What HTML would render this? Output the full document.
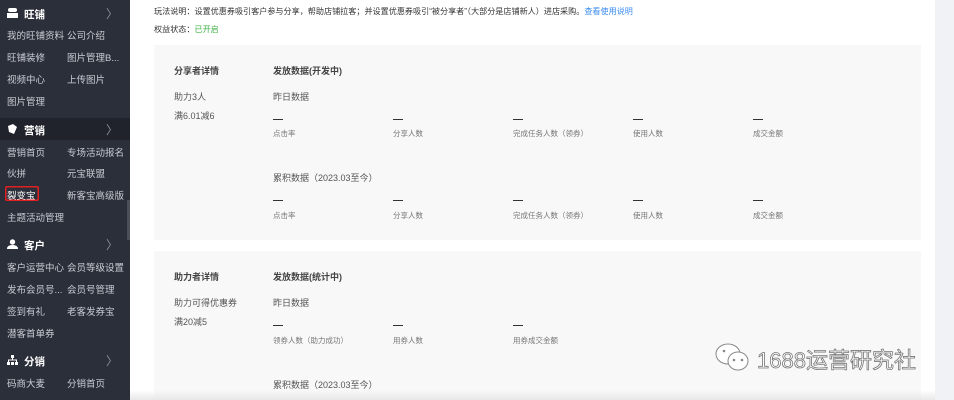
<!DOCTYPE html>
<html><head><meta charset="utf-8"><style>
*{margin:0;padding:0;box-sizing:border-box}
body{width:954px;height:400px;overflow:hidden;background:#fff;font-family:"Liberation Sans","Noto Sans CJK SC",sans-serif;position:relative}
.sb{position:absolute;left:0;top:0;width:130px;height:400px;background:#2b2f3a;color:#c9ccd3;font-size:9.5px}
.sb .t{position:absolute;white-space:nowrap}
.sb .h{position:absolute;left:0;width:130px;height:22px;color:#fff;font-size:10.5px;font-weight:bold}
.sb .h span{position:absolute;left:24px;top:5px}
.sb .h i{position:absolute;right:12px;top:3px;font-style:normal;color:#8a8f99;font-weight:normal;font-size:12px}
.ic{position:absolute;left:7px;top:6px;width:11px;height:10px}
.main{position:absolute;left:130px;top:0;width:805px;height:400px;background:#fff}
.rs{position:absolute;left:935px;top:0;width:19px;height:400px;background:#f0f2f5}
.p{position:absolute;left:154px;width:767px;background:#f8f8f8}
.a{position:absolute;font-size:9px;color:#333;white-space:nowrap}
.b{font-weight:600;color:#444}
.s{position:absolute;font-size:7.5px;color:#777;white-space:nowrap}
.d{position:absolute;width:10px;height:1.2px;background:#333}
</style></head><body>
<div class="sb">
 <div class="h" style="top:2px;background:#2b2f3a"><svg class="ic" viewBox="0 0 11 10"><rect x="1" y="0" width="9" height="4" rx="2" fill="#fff"/><rect x="0" y="5" width="11" height="5" fill="#fff"/></svg><span>旺铺</span><i>〉</i></div>
 <div class="t" style="left:7px;top:28px">我的旺铺资料</div><div class="t" style="left:67px;top:28px">公司介绍</div>
 <div class="t" style="left:7px;top:50px">旺铺装修</div><div class="t" style="left:67px;top:50px">图片管理B...</div>
 <div class="t" style="left:7px;top:72px">视频中心</div><div class="t" style="left:67px;top:72px">上传图片</div>
 <div class="t" style="left:7px;top:94px">图片管理</div>
 <div class="h" style="top:118px;background:#20232b"><svg class="ic" viewBox="0 0 11 10"><path d="M1 2 L6 0 L10 3 L7 10 L2 8 Z" fill="#fff"/></svg><span>营销</span><i>〉</i></div>
 <div class="t" style="left:7px;top:145px">营销首页</div><div class="t" style="left:67px;top:145px">专场活动报名</div>
 <div class="t" style="left:7px;top:166px">伙拼</div><div class="t" style="left:67px;top:166px">元宝联盟</div>
 <div style="position:absolute;left:5px;top:186px;width:34px;height:15px;box-shadow:inset 0 0 0 1.5px #e02020;border-radius:2px"></div>
 <div class="t" style="left:7px;top:188px;color:#fff">裂变宝</div><div class="t" style="left:67px;top:188px">新客宝高级版</div>
 <div class="t" style="left:7px;top:210px">主题活动管理</div>
 <div class="h" style="top:233px"><svg class="ic" viewBox="0 0 11 10"><circle cx="5.5" cy="3" r="2.7" fill="#fff"/><path d="M0 10 Q0 6 5.5 6 Q11 6 11 10Z" fill="#fff"/></svg><span>客户</span><i>〉</i></div>
 <div class="t" style="left:7px;top:260px">客户运营中心</div><div class="t" style="left:67px;top:260px">会员等级设置</div>
 <div class="t" style="left:7px;top:282px">发布会员号...</div><div class="t" style="left:67px;top:282px">会员号管理</div>
 <div class="t" style="left:7px;top:304px">签到有礼</div><div class="t" style="left:67px;top:304px">老客发券宝</div>
 <div class="t" style="left:7px;top:326px">潜客首单券</div>
 <div class="h" style="top:349px"><svg class="ic" viewBox="0 0 11 10"><rect x="4" y="0" width="3" height="3" fill="#fff"/><path d="M5.5 3V5M1.5 7V5H9.5V7" stroke="#fff" fill="none"/><rect x="0" y="7" width="3" height="3" fill="#fff"/><rect x="4" y="7" width="3" height="3" fill="#fff"/><rect x="8" y="7" width="3" height="3" fill="#fff"/></svg><span>分销</span><i>〉</i></div>
 <div class="t" style="left:7px;top:376px">码商大麦</div><div class="t" style="left:67px;top:376px">分销首页</div>
 <div style="position:absolute;left:127px;top:200px;width:3px;height:40px;background:#4a4f5a"></div>
</div>
<div class="main"></div>
<div class="rs"></div>
<div class="a" style="left:154px;top:6px;font-size:8.1px">玩法说明：设置优惠券吸引客户参与分享，帮助店铺拉客；并设置优惠券吸引“被分享者”（大部分是店铺新人）进店采购。<span style="color:#3b8cf0">查看使用说明</span></div>
<div class="a" style="left:154px;top:24px;font-size:8.1px">权益状态：<span style="color:#3cb043">已开启</span></div>
<div class="p" style="top:45px;height:195px"></div>
<div class="p" style="top:251px;height:149px"></div>
<div class="a b" style="left:174px;top:64px">分享者详情</div>
<div class="a b" style="left:273px;top:64px">发放数据(开发中)</div>
<div class="a" style="left:174px;top:90px;color:#555">助力3人</div>
<div class="a" style="left:273px;top:90px;color:#555">昨日数据</div>
<div class="a" style="left:174px;top:109px;color:#555">满6.01减6</div>
<div class="d" style="left:273px;top:119px"></div><div class="d" style="left:393px;top:119px"></div><div class="d" style="left:513px;top:119px"></div><div class="d" style="left:633px;top:119px"></div><div class="d" style="left:753px;top:119px"></div>
<div class="s" style="left:273px;top:128px">点击率</div><div class="s" style="left:393px;top:128px">分享人数</div><div class="s" style="left:513px;top:128px">完成任务人数（领券）</div><div class="s" style="left:633px;top:128px">使用人数</div><div class="s" style="left:753px;top:128px">成交金额</div>
<div class="a" style="left:273px;top:171px;color:#555">累积数据（2023.03至今）</div>
<div class="d" style="left:273px;top:200px"></div><div class="d" style="left:393px;top:200px"></div><div class="d" style="left:513px;top:200px"></div><div class="d" style="left:633px;top:200px"></div><div class="d" style="left:753px;top:200px"></div>
<div class="s" style="left:273px;top:210px">点击率</div><div class="s" style="left:393px;top:210px">分享人数</div><div class="s" style="left:513px;top:210px">完成任务人数（领券）</div><div class="s" style="left:633px;top:210px">使用人数</div><div class="s" style="left:753px;top:210px">成交金额</div>
<div class="a b" style="left:174px;top:270px">助力者详情</div>
<div class="a b" style="left:273px;top:270px">发放数据(统计中)</div>
<div class="a" style="left:174px;top:296px;color:#555">助力可得优惠券</div>
<div class="a" style="left:273px;top:296px;color:#555">昨日数据</div>
<div class="a" style="left:174px;top:315px;color:#555">满20减5</div>
<div class="d" style="left:273px;top:325px"></div><div class="d" style="left:393px;top:325px"></div><div class="d" style="left:513px;top:325px"></div>
<div class="s" style="left:273px;top:335px">领券人数（助力成功）</div><div class="s" style="left:393px;top:335px">用券人数</div><div class="s" style="left:513px;top:335px">用券成交金额</div>
<div class="a" style="left:273px;top:378px;color:#555">累积数据（2023.03至今）</div>
<div style="position:absolute;left:130px;top:390px;width:805px;height:10px;background:linear-gradient(#fff0,#e8e8e8)"></div>
<svg style="position:absolute;left:714px;top:342px" width="38" height="32" viewBox="0 0 38 32"><ellipse cx="14" cy="12" rx="12" ry="10" fill="#fff" stroke="#888"/><ellipse cx="24" cy="19" rx="10" ry="9" fill="#fff" stroke="#888"/><circle cx="20" cy="18" r="1.3" fill="#888"/><circle cx="28" cy="18" r="1.3" fill="#888"/><circle cx="10" cy="9" r="1.3" fill="#888"/></svg>
<div style="position:absolute;left:757px;top:343px;font-size:22px;color:#fff;-webkit-text-stroke:0.8px #777;white-space:nowrap;font-family:'Liberation Sans','Noto Sans CJK SC',sans-serif">1688运营研究社</div>
</body></html>
